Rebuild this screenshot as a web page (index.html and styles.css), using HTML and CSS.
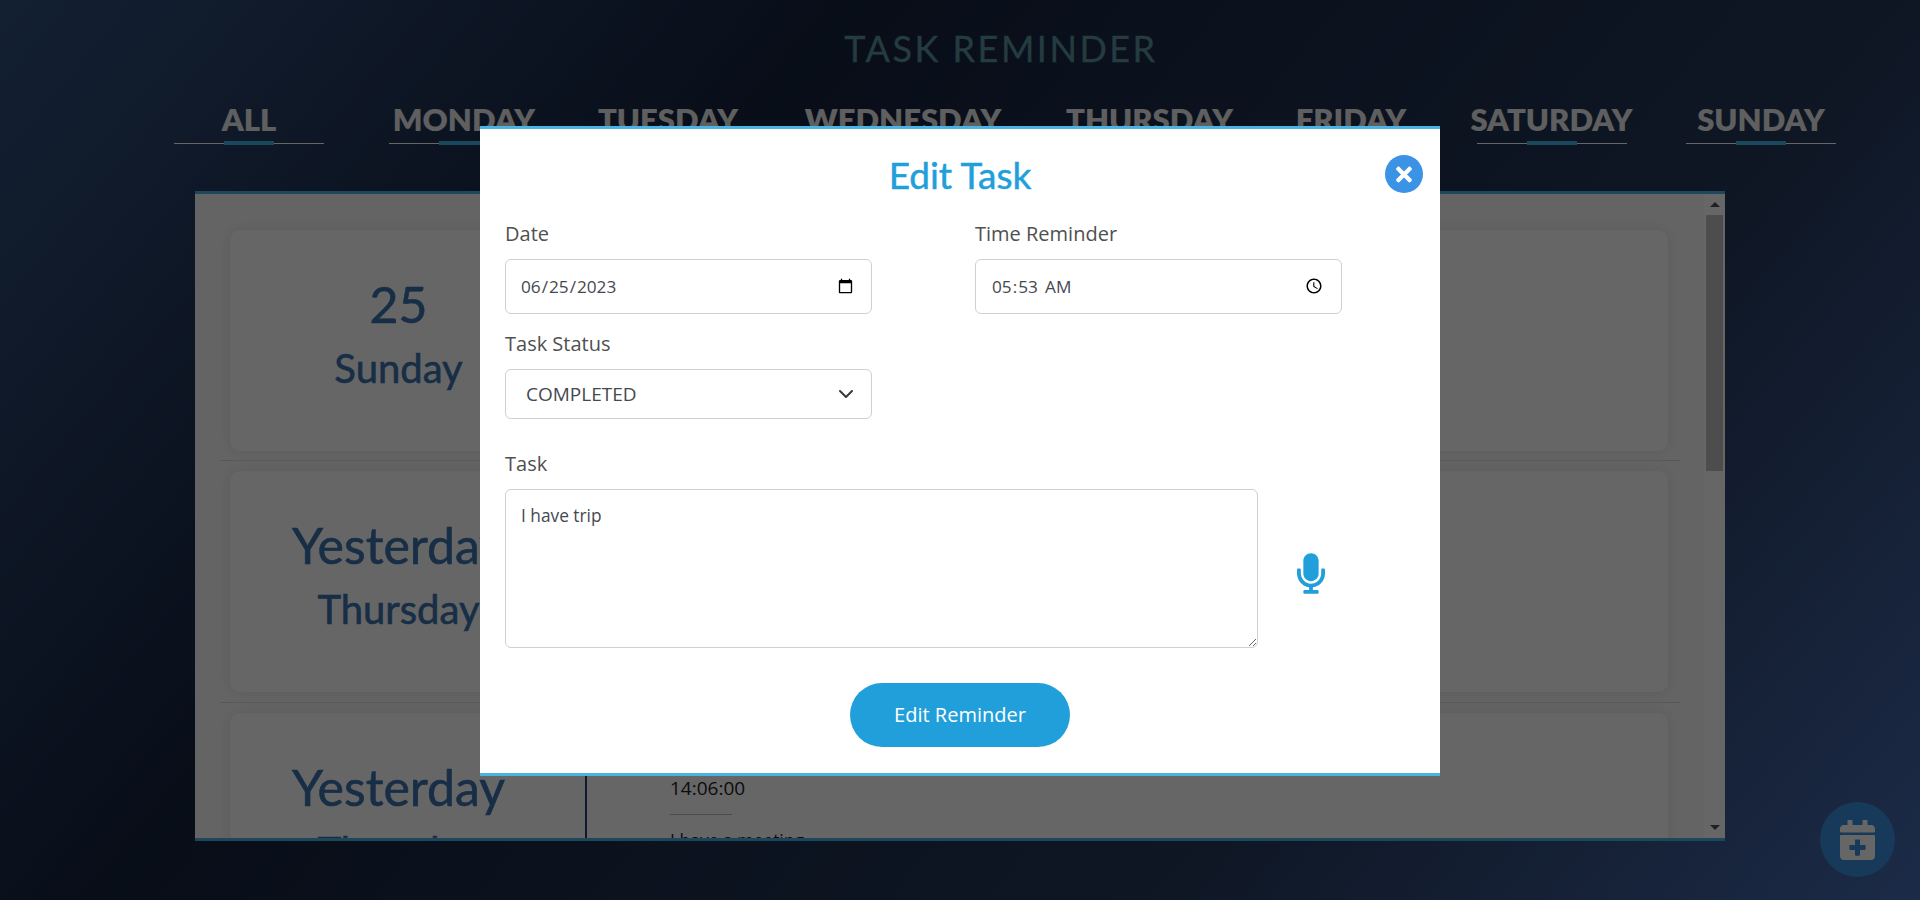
FILE: index.html
```html
<!DOCTYPE html>
<html lang="en">
<head>
<meta charset="utf-8">
<title>Task Reminder</title>
<link rel="stylesheet" href="styles.css">
</head>
<body>
<div class="page">
  <h1 class="title">TASK REMINDER</h1>
  <nav class="days">
    <a class="day day-all">ALL</a>
    <a class="day day-mon">MONDAY</a>
    <a class="day day-tue">TUESDAY</a>
    <a class="day day-wed">WEDNESDAY</a>
    <a class="day day-thu">THURSDAY</a>
    <a class="day day-fri">FRIDAY</a>
    <a class="day day-sat">SATURDAY</a>
    <a class="day day-sun">SUNDAY</a>
  </nav>
  <section class="panel">
    <div class="list">
      <article class="row">
        <div class="card">
          <div class="when"><div class="when-big">25</div><div class="when-small">Sunday</div></div>
          <div class="what"><div class="time">05:53:00</div><hr class="rule"><p class="text">I have trip</p></div>
        </div>
        <hr class="sep">
      </article>
      <article class="row">
        <div class="card">
          <div class="when"><div class="when-big">Yesterday</div><div class="when-small">Thursday</div></div>
          <div class="what"><div class="time">09:30:00</div><hr class="rule"><p class="text">I have a call</p></div>
        </div>
        <hr class="sep">
      </article>
      <article class="row">
        <div class="card">
          <div class="when"><div class="when-big">Yesterday</div><div class="when-small">Thursday</div></div>
          <div class="what"><div class="time">14:06:00</div><hr class="rule"><p class="text">I have a meeting</p></div>
        </div>
      </article>
    </div>
    <div class="scrollbar" aria-hidden="true">
      <span class="arrow arrow-up"></span>
      <span class="thumb"></span>
      <span class="track"></span>
      <span class="arrow arrow-down"></span>
    </div>
  </section>
</div>

<button class="fab" type="button" aria-label="Add task">
  <svg class="fab-icon" viewBox="0 0 448 512" aria-hidden="true"><path d="M436 160H12c-6.6 0-12-5.4-12-12v-36c0-26.5 21.5-48 48-48h48V12c0-6.6 5.4-12 12-12h40c6.6 0 12 5.4 12 12v52h128V12c0-6.6 5.4-12 12-12h40c6.6 0 12 5.4 12 12v52h48c26.5 0 48 21.5 48 48v36c0 6.6-5.4 12-12 12zM12 192h424c6.6 0 12 5.4 12 12v260c0 26.5-21.5 48-48 48H48c-26.5 0-48-21.5-48-48V204c0-6.6 5.4-12 12-12zm316 140c0-6.6-5.4-12-12-12h-60v-60c0-6.6-5.4-12-12-12h-40c-6.6 0-12 5.4-12 12v60h-60c-6.6 0-12 5.4-12 12v40c0 6.6 5.4 12 12 12h60v60c0 6.6 5.4 12 12 12h40c6.6 0 12-5.4 12-12v-60h60c6.6 0 12-5.4 12-12v-40z"/></svg>
</button>

<div class="overlay">
  <form class="modal">
    <h2 class="modal-title">Edit Task</h2>
    <button class="close" type="button" aria-label="Close">
      <svg class="close-icon" viewBox="0 0 352 512" aria-hidden="true"><path d="M242.72 256l100.07-100.07c12.28-12.28 12.28-32.19 0-44.48l-22.24-22.24c-12.28-12.28-32.19-12.28-44.48 0L176 189.28 75.93 89.21c-12.28-12.28-32.19-12.28-44.48 0L9.21 111.45c-12.28 12.28-12.28 32.19 0 44.48L109.28 256 9.21 356.07c-12.28 12.28-12.28 32.19 0 44.48l22.24 22.24c12.28 12.28 32.2 12.28 44.48 0L176 322.72l100.07 100.07c12.28 12.28 32.2 12.28 44.48 0l22.24-22.24c12.28-12.28 12.28-32.19 0-44.48L242.72 256z"/></svg>
    </button>
    <div class="fields">
      <div class="field">
        <label class="label" for="d">Date</label>
        <input class="control control-date" id="d" type="date" value="2023-06-25">
      </div>
      <div class="field">
        <label class="label" for="t">Time Reminder</label>
        <input class="control control-time" id="t" type="time" value="05:53">
      </div>
      <div class="field">
        <label class="label" for="s">Task Status</label>
        <select class="control control-select" id="s">
          <option>COMPLETED</option>
          <option>PENDING</option>
        </select>
      </div>
    </div>
    <label class="label label-task" for="x">Task</label>
    <div class="task-row">
      <textarea class="control control-area" id="x">I have trip</textarea>
      <svg class="mic" viewBox="0 0 352 512" aria-hidden="true"><path d="M176 352c53.02 0 96-42.98 96-96V96c0-53.02-42.98-96-96-96S80 42.98 80 96v160c0 53.02 42.98 96 96 96zm160-160h-16c-8.84 0-16 7.16-16 16v48c0 74.8-64.5 134.82-140.79 127.38C96.71 376.89 48 317.11 48 250.3V208c0-8.84-7.16-16-16-16H16c-8.84 0-16 7.16-16 16v40.16c0 89.64 63.97 169.55 152 181.69V464H96c-8.84 0-16 7.16-16 16v16c0 8.84 7.16 16 16 16h160c8.84 0 16-7.16 16-16v-16c0-8.84-7.16-16-16-16h-56v-33.77C285.71 418.47 352 344.9 352 256v-48c0-8.84-7.16-16-16-16z"/></svg>
    </div>
    <div class="actions"><button class="submit" type="button">Edit Reminder</button></div>
  </form>
</div>
</body>
</html>
```
FILE: styles.css
```css
* { box-sizing: border-box; }
html, body { margin: 0; height: 100%; }
body {
  height: 900px;
  overflow: hidden;
  font-family: "Open Sans", sans-serif;
  background: linear-gradient(130deg, #31517f 0, #16233e 32%, #263a5c 72%, #466bb2 100%);
}
.page { height: 900px; display: flex; flex-direction: column; }
.title {
  margin: 0;
  padding: 25px 0 0 82px;
  height: 99px;
  text-align: center;
  font: 400 36px/46px Lato, sans-serif;
  letter-spacing: 2.5px;
  color: #5b94a0;
  -webkit-text-stroke: .3px #5b94a0;
}
.days { display: flex; height: 92px; padding-left: 174px; }
.day {
  position: relative;
  height: 45px;
  text-align: center;
  white-space: nowrap;
  font: 800 31px/40px Lato, sans-serif;
  color: #eeeeee;
}
.day::before {
  content: "";
  position: absolute;
  left: 50%;
  bottom: 0;
  width: 150px;
  height: 1px;
  margin-left: -75px;
  background: #fff;
}
.day::after {
  content: "";
  position: absolute;
  left: 50%;
  bottom: -1px;
  width: 50px;
  height: 4px;
  margin-left: -25px;
  background: #46b3e6;
}
.day-all { width: 150px; }
.day-mon { width: 150px; margin-left: 65px; }
.day-tue { width: 150px; margin-left: 54px; }
.day-wed { width: 202px; margin-left: 59px; }
.day-thu { width: 167px; margin-left: 62px; }
.day-fri { width: 150px; margin-left: 43px; }
.day-sat { width: 163px; margin-left: 44px; }
.day-sun { width: 150px; margin-left: 53px; }

.panel {
  display: flex;
  width: 1530px;
  height: 650px;
  margin-left: 195px;
  overflow: hidden;
  background: #fbfbfb;
  border-top: 3px solid #4ab3e6;
  border-bottom: 3px solid #4ab3e6;
}
.list { flex: 1; min-width: 0; padding-top: 35.5px; }
.scrollbar {
  display: flex;
  flex: 0 0 21px;
  flex-direction: column;
  align-items: center;
  background: #fff;
}
.arrow { flex: 0 0 21px; position: relative; width: 17px; }
.arrow::after {
  content: "";
  position: absolute;
  left: 3.5px;
  width: 0;
  height: 0;
  border-left: 5px solid transparent;
  border-right: 5px solid transparent;
}
.arrow-up::after { top: 8px; border-bottom: 5px solid #505050; }
.arrow-down::after { bottom: 8px; border-top: 5px solid #505050; }
.thumb { flex: 0 0 256px; width: 17px; background: #c1c1c1; }
.track { flex: 1; }
.row { padding: 0 24px 0 25px; }
.card {
  display: flex;
  height: 221px;
  margin: 0 12px 0 10px;
  border-radius: 10px;
  background: #fff;
  box-shadow: 0 0 16px rgba(0, 0, 0, .1);
}
.sep {
  height: 1px;
  margin: 9.5px 0 10px;
  border: 0;
  background: #ddd;
}
.when {
  flex: 0 0 357px;
  padding: 44px 18px 0 0;
  text-align: center;
  border-right: 2px solid #2c4372;
  color: #3a74ae;
  -webkit-text-stroke: .6px #3a74ae;
}
.when-big { font: 400 50px/60px Lato, sans-serif; }
.when-small { font: 400 40px/68px Lato, sans-serif; }
.what { padding: 60px 0 0 83px; color: #222; }
.time { font-size: 19px; line-height: 30px; }
.rule { width: 62px; height: 1px; margin: 11px 0 13px; border: 0; background: #bbb; }
.text { margin: 0; font-size: 17.5px; line-height: 24px; }

.fab {
  position: fixed;
  left: 1820px;
  top: 802px;
  width: 75px;
  height: 75px;
  padding: 0;
  border: 0;
  border-radius: 50%;
  background: #3b8ee2;
  display: flex;
  align-items: center;
  justify-content: center;
}
.fab-icon { width: 35px; height: 40px; fill: #fff; }

.overlay {
  position: fixed;
  inset: 0;
  background: rgba(0, 0, 0, .6);
}
.modal {
  position: absolute;
  left: 480px;
  top: 126px;
  width: 960px;
  height: 650px;
  padding: 0 25px;
  background: #fff;
  border-top: 3px solid #4ab3e6;
  border-bottom: 3px solid #4ab3e6;
}
.modal-title {
  margin: 0;
  padding-top: 24px;
  height: 90px;
  text-align: center;
  font: 400 37px/44px Lato, sans-serif;
  color: #209fdb;
  -webkit-text-stroke: .5px #209fdb;
}
.close {
  position: absolute;
  left: 905px;
  top: 26px;
  width: 38px;
  height: 38px;
  padding: 0;
  border: 0;
  border-radius: 50%;
  background: #3b93e6;
  display: flex;
  align-items: center;
  justify-content: center;
}
.close-icon { width: 16px; height: 23px; fill: #fff; }
.fields {
  display: grid;
  grid-template-columns: 367px 367px;
  column-gap: 103px;
  row-gap: 15px;
  align-items: start;
}
.field { display: flex; flex-direction: column; gap: 10px; }
.label {
  display: block;
  font-size: 20px;
  line-height: 30px;
  color: #505050;
}
.control {
  border: 1.5px solid #ced0d4;
  border-radius: 6px;
  background: #fff;
  color: #444950;
  font-family: "Open Sans", sans-serif;
  outline: 0;
}
.control-date { height: 55px; padding: 0 15px 0 14px; font-size: 17.2px; }
.control-time { height: 55px; padding: 0 15px; font-size: 17.2px; }
.control-time::-webkit-datetime-edit-ampm-field { margin-left: 3px; }
.control-select {
  height: 50px;
  padding: 0 20px;
  font-size: 19px;
  appearance: none;
  background-image: url("data:image/svg+xml,%3Csvg xmlns='http://www.w3.org/2000/svg' viewBox='0 0 16 16'%3E%3Cpath fill='none' stroke='%23343a40' stroke-linecap='round' stroke-linejoin='round' stroke-width='2' d='M2 5l6 6 6-6'/%3E%3C/svg%3E");
  background-repeat: no-repeat;
  background-position: right 17px center;
  background-size: 16px 16px;
}
.label-task { margin: 30px 0 10px; }
.task-row { display: flex; align-items: center; }
.control-area {
  display: block;
  flex: 0 0 753px;
  height: 159px;
  padding: 13px 15px;
  font-size: 17.3px;
  line-height: 26px;
}
.mic { width: 28px; height: 41px; margin: 9px 0 0 39px; fill: #209fdb; }
.actions { display: flex; justify-content: center; padding-top: 35px; }
.submit {
  width: 220px;
  height: 64px;
  border: 0;
  border-radius: 32px;
  background: #209fdb;
  color: #fff;
  font: 500 20px/24px "Open Sans", sans-serif;
}
```
